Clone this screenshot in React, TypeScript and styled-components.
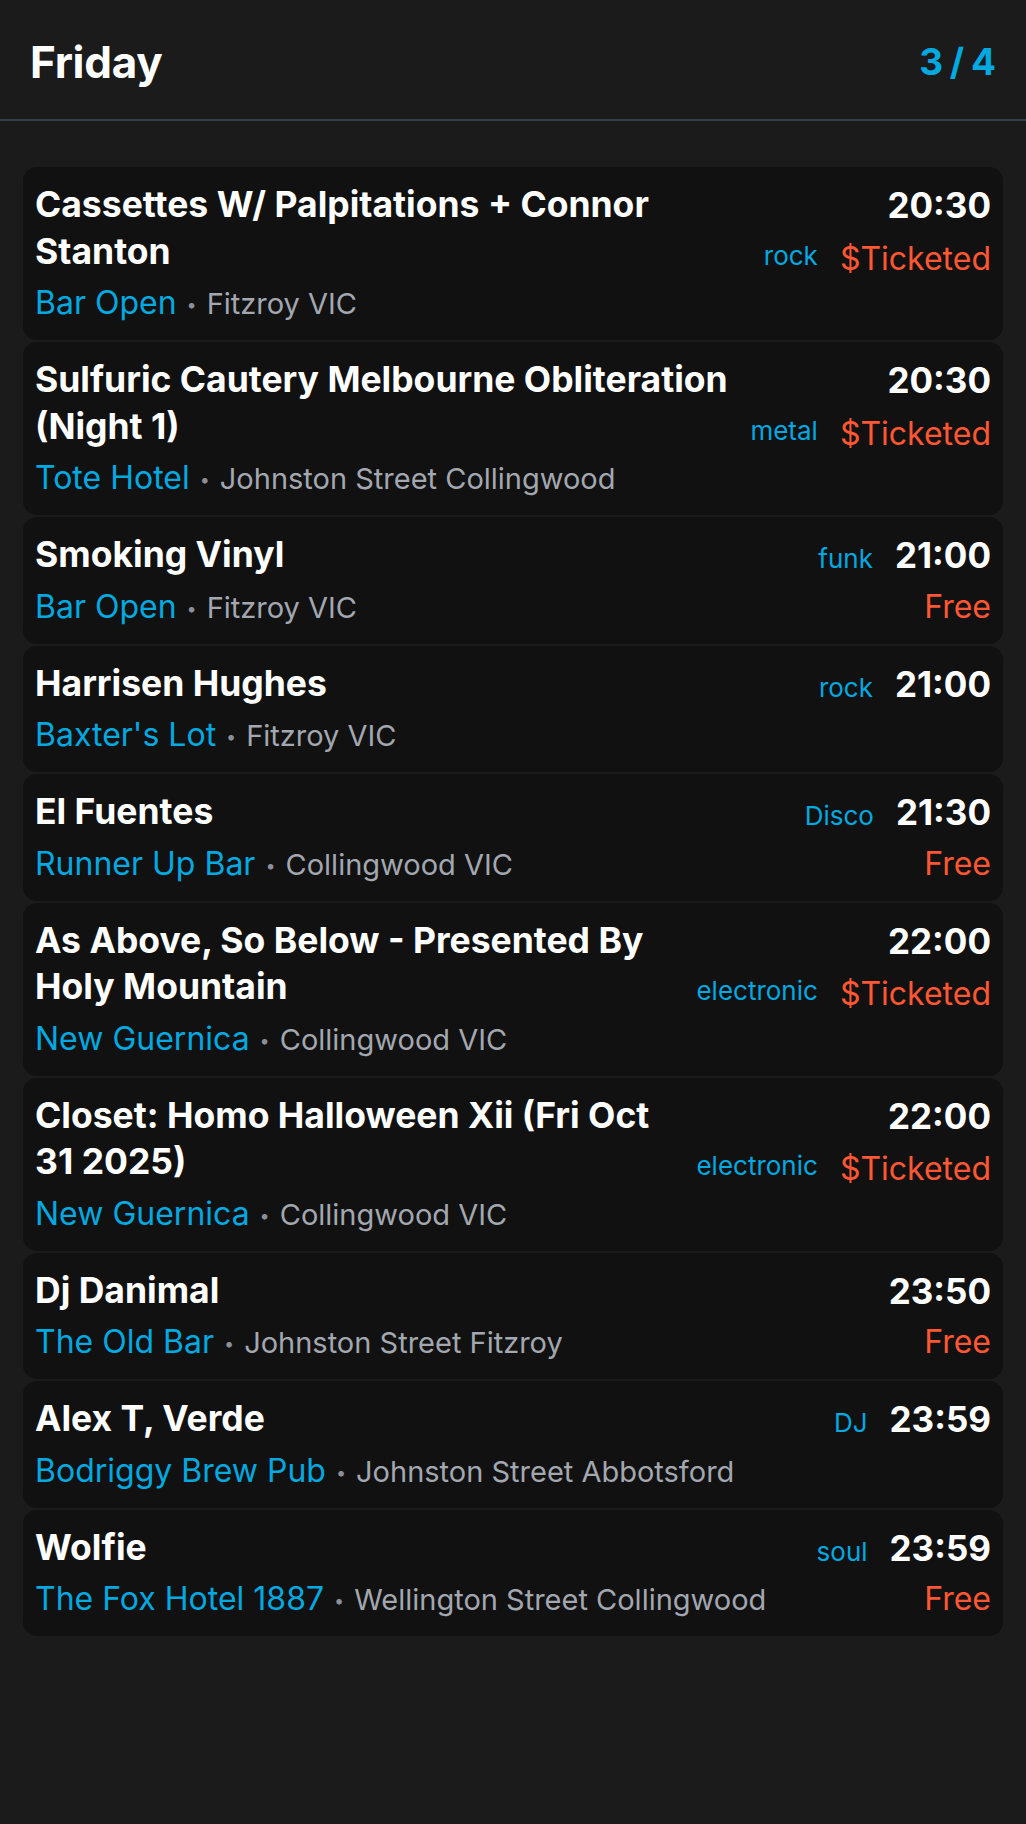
import React from "react";
import styled, { createGlobalStyle } from "styled-components";

const Global = createGlobalStyle`
  html, body {
    margin: 0;
    padding: 0;
    background: #1b1b1b;
    font-family: Inter, "Noto Sans", sans-serif;
    -webkit-font-smoothing: antialiased;
  }
`;

const Page = styled.div`
  min-height: 1824px;
  background: #1b1b1b;
  color: #fff;
`;

const Header = styled.header`
  height: 115px;
  padding: 4px 31px 0 30px;
  display: flex;
  align-items: center;
  justify-content: space-between;
  border-bottom: 2px solid #363f4b;
`;

const DayTitle = styled.h1`
  margin: 0;
  font-size: 44px;
  font-weight: 700;
  letter-spacing: -0.3px;
  color: #fff;
`;

const PageCount = styled.div`
  font-size: 37px;
  font-weight: 700;
  letter-spacing: -1px;
  color: #00a9e0;
`;

const List = styled.main`
  display: flex;
  flex-direction: column;
  gap: 2px;
  padding: 46px 23px 40px;
`;

const Card = styled.article`
  background: #111111;
  border-radius: 14px;
  padding: 15px 12px 17px 12px;
  display: flex;
  flex-direction: column;
  gap: 8px;
`;

const Top = styled.div`
  display: flex;
  align-items: flex-start;
  justify-content: space-between;
  gap: 12px;
`;

const Title = styled.h2`
  margin: 0;
  flex: 1;
  font-size: 35.5px;
  line-height: 46.5px;
  font-weight: 700;
  color: #fff;
`;

const Side = styled.div`
  display: flex;
  flex-direction: column;
  align-items: flex-end;
  flex-shrink: 0;
`;

const TimeLine = styled.div`
  display: flex;
  align-items: baseline;
  justify-content: flex-end;
  gap: 22px;
  height: 46.5px;
  line-height: 46.5px;
`;

const PriceLine = styled.div`
  display: flex;
  align-items: center;
  justify-content: flex-end;
  gap: 22px;
  box-sizing: border-box;
  height: 46.5px;
  padding-top: 13px;
  line-height: 33px;
`;

const Time = styled.span`
  font-size: 35px;
  font-weight: 700;
  color: #fff;
`;

const Genre = styled.span<{ $raised?: boolean }>`
  font-size: 26px;
  color: #00a9e0;
  margin-bottom: ${(p) => (p.$raised ? "6px" : "0")};
`;

const Price = styled.span`
  font-size: 32px;
  color: #ff5733;
`;

const Bottom = styled.div`
  display: flex;
  align-items: baseline;
  justify-content: space-between;
  gap: 20px;
  font-size: 32px;
  line-height: 40px;
  height: 40px;
`;

const Venue = styled.div`
  white-space: nowrap;
  overflow: hidden;
  min-width: 0;
  & > span {
    line-height: 1;
  }
`;

const VenueName = styled.span`
  font-size: 32px;
  color: #00a9e0;
`;

const Dot = styled.span`
  display: inline-block;
  font-size: 18px;
  color: #8a8f99;
  margin: 0 10px;
  vertical-align: 3px;
`;

const Place = styled.span`
  font-size: 29px;
  color: #a3a7b0;
`;

type Gig = {
  title: string;
  venue: string;
  place: string;
  time: string;
  genre?: string;
  price?: string;
  wrap?: boolean;
};

const gigs: Gig[] = [
  { title: "Cassettes W/ Palpitations + Connor Stanton", venue: "Bar Open", place: "Fitzroy VIC", time: "20:30", genre: "rock", price: "$Ticketed", wrap: true },
  { title: "Sulfuric Cautery Melbourne Obliteration (Night 1)", venue: "Tote Hotel", place: "Johnston Street Collingwood", time: "20:30", genre: "metal", price: "$Ticketed", wrap: true },
  { title: "Smoking Vinyl", venue: "Bar Open", place: "Fitzroy VIC", time: "21:00", genre: "funk", price: "Free" },
  { title: "Harrisen Hughes", venue: "Baxter's Lot", place: "Fitzroy VIC", time: "21:00", genre: "rock" },
  { title: "El Fuentes", venue: "Runner Up Bar", place: "Collingwood VIC", time: "21:30", genre: "Disco", price: "Free" },
  { title: "As Above, So Below - Presented By Holy Mountain", venue: "New Guernica", place: "Collingwood VIC", time: "22:00", genre: "electronic", price: "$Ticketed", wrap: true },
  { title: "Closet: Homo Halloween Xii (Fri Oct 31 2025)", venue: "New Guernica", place: "Collingwood VIC", time: "22:00", genre: "electronic", price: "$Ticketed", wrap: true },
  { title: "Dj Danimal", venue: "The Old Bar", place: "Johnston Street Fitzroy", time: "23:50", price: "Free" },
  { title: "Alex T, Verde", venue: "Bodriggy Brew Pub", place: "Johnston Street Abbotsford", time: "23:59", genre: "DJ" },
  { title: "Wolfie", venue: "The Fox Hotel 1887", place: "Wellington Street Collingwood", time: "23:59", genre: "soul", price: "Free" },
];

function GigCard({ gig }: { gig: Gig }) {
  const price = gig.price ? <Price>{gig.price}</Price> : null;
  return (
    <Card>
      <Top>
        <Title>{gig.title}</Title>
        <Side>
          <TimeLine>
            {!gig.wrap && gig.genre && <Genre>{gig.genre}</Genre>}
            <Time>{gig.time}</Time>
          </TimeLine>
          {gig.wrap && (
            <PriceLine>
              {gig.genre && <Genre $raised>{gig.genre}</Genre>}
              {price}
            </PriceLine>
          )}
        </Side>
      </Top>
      <Bottom>
        <Venue>
          <VenueName>{gig.venue}</VenueName>
          <Dot>•</Dot>
          <Place>{gig.place}</Place>
        </Venue>
        {!gig.wrap && price}
      </Bottom>
    </Card>
  );
}

export default function App() {
  return (
    <Page>
      <Global />
      <Header>
        <DayTitle>Friday</DayTitle>
        <PageCount>3 / 4</PageCount>
      </Header>
      <List>
        {gigs.map((g, i) => (
          <GigCard key={i} gig={g} />
        ))}
      </List>
    </Page>
  );
}
